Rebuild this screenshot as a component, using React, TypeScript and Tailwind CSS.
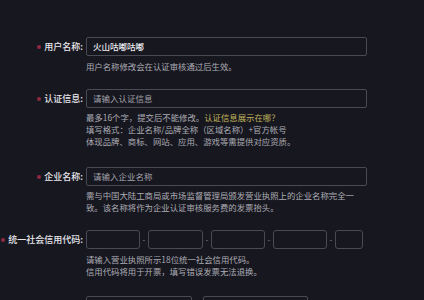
import React from "react";

const font = "font-['Noto_Sans_CJK_SC','Noto_Sans',sans-serif]";

function Label({ text, required = true }: { text: string; required?: boolean }) {
  return (
    <div className="w-[83px] h-[19px] shrink-0 flex items-center justify-end text-[9px] font-medium text-[#e8e8ec] whitespace-nowrap">
      {required && <span className="inline-block w-[4px] h-[4px] rounded-full bg-[#8e2b40] mr-[3px]" />}
      <span>{text}</span>
    </div>
  );
}

function Box({ w, children }: { w: string; children?: React.ReactNode }) {
  return (
    <div className={`${w} h-[19px] border border-[#4a4a55] rounded-[2px] px-[6px] flex items-center text-[8.5px] whitespace-nowrap`}>
      {children}
    </div>
  );
}

export default function App() {
  return (
    <div className={`w-[424px] h-[300px] overflow-hidden bg-[#171720] ${font}`}>
      <div className="pt-[37px] flex flex-col">
        {/* Row 1 */}
        <div className="flex items-start">
          <Label text="用户名称:" />
          <div className="ml-[3px]">
            <Box w="w-[281px]">
              <span className="text-[#ececef] font-medium">火山咕嘟咕嘟</span>
            </Box>
            <div className="mt-[4px] text-[8.4px] leading-[12px] text-[#acacb3] whitespace-nowrap">
              用户名称修改会在认证审核通过后生效。
            </div>
          </div>
        </div>

        {/* Row 2 */}
        <div className="flex items-start mt-[17px]">
          <Label text="认证信息:" />
          <div className="ml-[3px]">
            <Box w="w-[281px]">
              <span className="text-[#a2a2aa]">请输入认证信息</span>
            </Box>
            <div className="mt-[3px] text-[8.4px] leading-[12px] text-[#acacb3] whitespace-nowrap">
              最多16个字，提交后不能修改。<span className="text-[#c2b45c]">认证信息展示在哪？</span>
              <br />
              填写格式：企业名称/品牌全称（区域名称）+官方帐号
              <br />
              体现品牌、商标、网站、应用、游戏等需提供对应资质。
            </div>
          </div>
        </div>

        {/* Row 3 */}
        <div className="flex items-start mt-[20px]">
          <Label text="企业名称:" />
          <div className="ml-[3px]">
            <Box w="w-[281px]">
              <span className="text-[#a2a2aa]">请输入企业名称</span>
            </Box>
            <div className="mt-[3px] text-[8.4px] leading-[12px] text-[#acacb3] whitespace-nowrap">
              需与中国大陆工商局或市场监督管理局颁发营业执照上的企业名称完全一
              <br />
              致。该名称将作为企业认证审核服务费的发票抬头。
            </div>
          </div>
        </div>

        {/* Row 4 */}
        <div className="flex items-start mt-[17px]">
          <Label text="统一社会信用代码:" />
          <div className="ml-[3px]">
            <div className="flex items-center">
              <div className="w-[54px] h-[19px] border border-[#4a4a55] rounded-[3px]" />
              <span className="w-[8px] text-center text-[8px] text-[#8a8a92]">-</span>
              <div className="w-[55px] h-[19px] border border-[#4a4a55] rounded-[3px]" />
              <span className="w-[8px] text-center text-[8px] text-[#8a8a92]">-</span>
              <div className="w-[54px] h-[19px] border border-[#4a4a55] rounded-[3px]" />
              <span className="w-[8px] text-center text-[8px] text-[#8a8a92]">-</span>
              <div className="w-[54px] h-[19px] border border-[#4a4a55] rounded-[3px]" />
              <span className="w-[8px] text-center text-[8px] text-[#8a8a92]">-</span>
              <div className="w-[28px] h-[19px] border border-[#4a4a55] rounded-[3px]" />
            </div>
            <div className="mt-[4px] text-[8.4px] leading-[12px] text-[#acacb3] whitespace-nowrap">
              请输入营业执照所示18位统一社会信用代码。
              <br />
              信用代码将用于开票，填写错误发票无法退换。
            </div>
          </div>
        </div>

        {/* Row 5 */}
        <div className="flex items-start mt-[19px]">
          <Label text="开户银行:" required={false} />
          <div className="ml-[3px] flex items-center gap-[11px]">
            <div className="w-[106px] h-[19px] border border-[#4a4a55] rounded-[2px]" />
            <div className="w-[105px] h-[19px] border border-[#4a4a55] rounded-[2px]" />
          </div>
        </div>
      </div>
    </div>
  );
}
